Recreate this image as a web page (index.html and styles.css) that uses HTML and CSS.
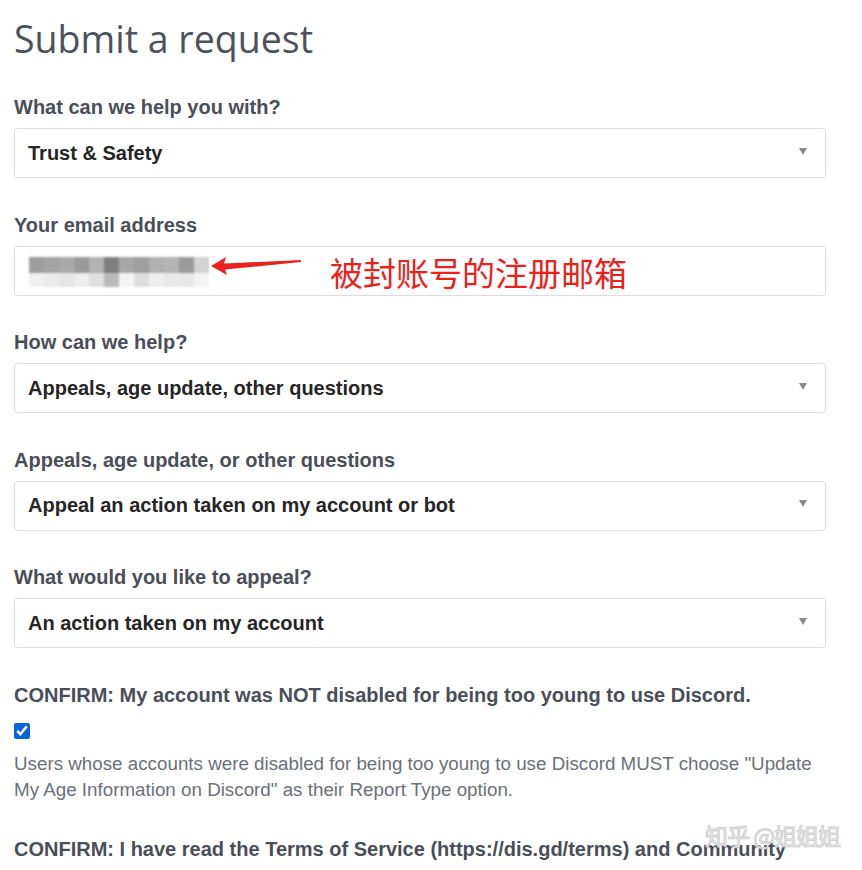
FILE: index.html
```html
<!DOCTYPE html>
<html lang="en">

<head>
  <meta charset="UTF-8">
  <meta name="viewport" content="width=device-width, initial-scale=1.0">
  <title>Submit a request</title>
  <link rel="stylesheet" href="styles.css">
</head>

<body>
  <main class="page">
    <h1 class="page-title">Submit a request</h1>

    <div class="field">
      <label class="field-label">What can we help you with?</label>
      <div class="select">
        <span>Trust &amp; Safety</span>
        <span class="select-arrow"></span>
      </div>
    </div>

    <div class="field">
      <label class="field-label">Your email address</label>
      <div class="input">
        <div class="blurred">
          <div class="blur-row">
            <i style="background:#9d9d9d"></i><i style="background:#a4a4a4"></i><i style="background:#a9a9a9"></i><i style="background:#9a9a9a"></i><i style="background:#b2b2b2"></i><i style="background:#7f7f7f"></i><i style="background:#a7a7a7"></i><i style="background:#9f9f9f"></i><i style="background:#b0b0b0"></i><i style="background:#b4b4b4"></i><i style="background:#9a9a9a"></i><i style="background:#d2d2d2"></i>
          </div>
          <div class="blur-row light">
            <i style="background:#f0f0f0"></i><i style="background:#ebebeb"></i><i style="background:#e6e6e6"></i><i style="background:#eeeeee"></i><i style="background:#e0e0e0"></i><i style="background:#b9b9b9"></i><i style="background:#f4f4f4"></i><i style="background:#dedede"></i><i style="background:#eeeeee"></i><i style="background:#e9e9e9"></i><i style="background:#e8e8e8"></i><i style="background:#f4f4f4"></i>
          </div>
        </div>
        <svg class="arrow" width="92" height="22" viewBox="0 0 92 22">
          <path d="M0 10 L15 1 L13 7.5 L90 4 L90 6 L14 13.5 L16 19 Z" fill="#e8231d" />
        </svg>
        <span class="note">被封账号的注册邮箱</span>
      </div>
    </div>

    <div class="field">
      <label class="field-label">How can we help?</label>
      <div class="select">
        <span>Appeals, age update, other questions</span>
        <span class="select-arrow"></span>
      </div>
    </div>

    <div class="field">
      <label class="field-label">Appeals, age update, or other questions</label>
      <div class="select">
        <span>Appeal an action taken on my account or bot</span>
        <span class="select-arrow"></span>
      </div>
    </div>

    <div class="field">
      <label class="field-label">What would you like to appeal?</label>
      <div class="select">
        <span>An action taken on my account</span>
        <span class="select-arrow"></span>
      </div>
    </div>

    <div class="field confirm">
      <label class="field-label">CONFIRM: My account was NOT disabled for being too young to use Discord.</label>
      <input type="checkbox" class="check" checked>
      <p class="hint">Users whose accounts were disabled for being too young to use Discord MUST choose "Update My Age Information on Discord" as their Report Type option.</p>
    </div>

    <div class="field confirm">
      <label class="field-label">CONFIRM: I have read the Terms of Service (https://dis.gd/terms) and Community</label>
    </div>
  </main>

  <div class="watermark">知乎 @姐姐姐</div>
</body>

</html>
```

FILE: styles.css
```css
* {
  margin: 0;
  padding: 0;
  box-sizing: border-box;
}

body {
  font-family: 'Liberation Sans', Arial, sans-serif;
  background-color: white;
  color: #4a4e57;
  overflow: hidden;
  height: 870px;
}

.page {
  width: 840px;
  padding: 14px 14px 0 14px;
}

.page-title {
  font-family: 'Open Sans', sans-serif;
  font-weight: 400;
  font-size: 37.5px;
  line-height: 50px;
  color: #4d525a;
  margin-bottom: 31px;
}

.field {
  margin-bottom: 34.5px;
}

.field-label {
  display: block;
  font-weight: 700;
  font-size: 20px;
  line-height: 24px;
  margin-bottom: 9px;
}

.select,
.input {
  height: 50px;
  border: 1px solid #dcdcdc;
  border-radius: 4px;
  display: flex;
  align-items: center;
  padding: 0 18px 0 13px;
  font-weight: 700;
  font-size: 20px;
  color: #262626;
}

.select span:first-child {
  flex: 1;
}

.select-arrow {
  width: 0;
  height: 0;
  border-left: 4px solid transparent;
  border-right: 4px solid transparent;
  border-top: 7px solid #8a8a8a;
  margin-top: -4px;
}

.input {
  position: relative;
  padding-left: 14px;
}

.blurred {
  display: flex;
  flex-direction: column;
  filter: blur(1px);
  margin-top: 3px;
}

.blur-row {
  display: flex;
  height: 16px;
}

.blur-row.light {
  height: 14px;
}

.blur-row i {
  width: 15px;
  height: 100%;
}

.arrow {
  margin-left: 2px;
  margin-top: -8px;
}

.note {
  font-family: 'Noto Sans CJK SC', sans-serif;
  font-weight: 400;
  font-size: 33px;
  color: #e8231d;
  margin-left: 27px;
  margin-top: 2px;
}

.confirm .field-label {
  margin-bottom: 16px;
  white-space: nowrap;
}

.check {
  display: block;
  width: 16px;
  height: 16px;
  accent-color: #0b63d8;
  margin-bottom: 12px;
}

.hint {
  font-size: 18.8px;
  line-height: 26px;
  color: #6c7078;
  margin-bottom: 1px;
}

.watermark {
  position: absolute;
  left: 705px;
  top: 818px;
  font-family: 'Noto Sans CJK SC', sans-serif;
  font-size: 23px;
  color: #f2f2f2;
  -webkit-text-stroke: 1px #cfcfcf;
  letter-spacing: -1px;
}
```
